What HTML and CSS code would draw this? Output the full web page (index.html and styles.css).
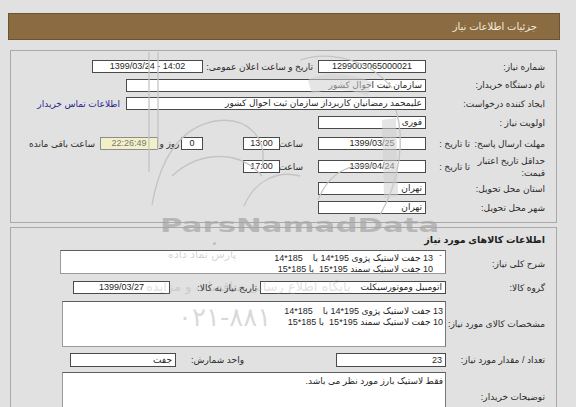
FILE: index.html
```html
<!DOCTYPE html>
<html lang="fa" dir="rtl">
<head>
<meta charset="utf-8">
<title>جزئیات اطلاعات نیاز</title>
<link rel="stylesheet" href="styles.css">
</head>
<body>
<div class="page">
  <div class="titlebar">جزئیات اطلاعات نیاز</div>

  <section class="panel p1">
    <div class="row h19">
      <div class="lbl">شماره نیاز:</div>
      <div class="box w108 center">1299003065000021</div>
      <div class="lbl2 w115">تاریخ و ساعت اعلان عمومی:</div>
      <div class="box w111 center ltr">1399/03/24 - 14:02</div>
    </div>
    <div class="row h18">
      <div class="lbl">نام دستگاه خریدار:</div>
      <div class="box w300">سازمان ثبت احوال کشور</div>
    </div>
    <div class="row h19">
      <div class="lbl">ایجاد کننده درخواست:</div>
      <div class="box w300">علیمحمد رمضانیان کاربرداز سازمان ثبت احوال کشور</div>
      <a class="link" href="#">اطلاعات تماس خریدار</a>
    </div>
    <div class="row h19">
      <div class="lbl">اولویت نیاز :</div>
      <div class="box w108">فوری</div>
    </div>
    <div class="row h23">
      <div class="lbl split"><span class="main">مهلت ارسال پاسخ:</span><span class="sub">تا تاریخ :</span></div>
      <div class="box w108 center">1399/03/25</div>
      <div class="hour">ساعت</div>
      <div class="box w37 center">13:00</div>
      <div class="spacer40"></div>
      <div class="box w22 center">0</div>
      <div class="day">روز و</div>
      <div class="box remain center">22:26:49</div>
      <div class="remain-lbl">ساعت باقی مانده</div>
    </div>
    <div class="row h23">
      <div class="lbl split"><span class="main two">حداقل تاریخ اعتبار<br>قیمت:</span><span class="sub">تا تاریخ :</span></div>
      <div class="box w108 center">1399/04/24</div>
      <div class="hour">ساعت</div>
      <div class="box w37 center">17:00</div>
    </div>
    <div class="row h21">
      <div class="lbl">استان محل تحویل:</div>
      <div class="box w108">تهران</div>
    </div>
    <div class="row h17">
      <div class="lbl">شهر محل تحویل:</div>
      <div class="box w108">تهران</div>
    </div>
  </section>

  <section class="panel p2">
    <div class="ptitle">اطلاعات کالاهای مورد نیاز</div>
    <div class="row r-a">
      <div class="lbl l2">شرح کلی نیاز:</div>
      <div class="area a1"><span class="scroll">&#710;</span>13 جفت لاستیک پژوی 195*14 با&nbsp;&nbsp;&nbsp;&nbsp;185*14<br>10 جفت لاستیک سمند 195*15&nbsp;&nbsp;با 185*15</div>
    </div>
    <div class="row r-b">
      <div class="lbl l2">گروه کالا:</div>
      <div class="box w186">اتومبیل وموتورسیکلت</div>
      <div class="lbl3">تاریخ نیاز به کالا:</div>
      <div class="box w97 center">1399/03/27</div>
    </div>
    <div class="row r-c">
      <div class="lbl l2">مشخصات کالای مورد نیاز:</div>
      <div class="area a2">13 جفت لاستیک پژوی 195*14 با&nbsp;&nbsp;&nbsp;&nbsp;185*14<br>10 جفت لاستیک سمند 195*15&nbsp;&nbsp;با 185*15</div>
    </div>
    <div class="row r-d">
      <div class="lbl l2">تعداد / مقدار مورد نیاز:</div>
      <div class="box w110 tall">23</div>
      <div class="lbl4">واحد شمارش:</div>
      <div class="box w106 tall">جفت</div>
    </div>
    <div class="row r-e">
      <div class="lbl l2">توضیحات خریدار:</div>
      <div class="area a3">فقط لاستیک بارز مورد نظر می باشد.</div>
    </div>
  </section>
</div>

<div class="watermark" aria-hidden="true">
  <svg class="wm-logo" width="576" height="407" viewBox="0 0 576 407">
    <g fill="none" stroke="#c4c4c4" stroke-width="1.3">
      <path d="M149 52 V172"/>
      <path d="M158 52 V150"/>
      <path d="M152 205 C160 160 178 128 215 121 C248 116 268 138 262 168"/>
      <path d="M172 176 C200 150 240 150 262 176"/>
      <path d="M244 206 C255 180 278 170 300 176"/>
      <path d="M300 60 C330 50 370 60 392 88"/>
      <path d="M396 110 C405 140 400 180 380 215"/>
      <path d="M318 200 C330 170 355 160 380 168"/>
    </g>
    <g fill="#d0d0d0" opacity="0.55">
      <path d="M308 80 C320 72 350 72 372 82 L368 96 C350 88 326 88 312 94 Z"/>
      <path d="M382 120 L396 118 L398 196 L384 198 Z"/>
    </g>
  </svg>
  <div class="wm-brand">ParsNamadData</div>
  <div class="wm-dot"></div>
  <div class="wm-fa">پارس نماد داده</div>
  <div class="wm-sub">پایگاه اطلاع رسانی مناقصات و مزایده</div>
  <div class="wm-phone">۰۲۱-۸۸۱</div>
</div>
</body>
</html>
```

FILE: styles.css
```css
* { box-sizing: border-box; }
html, body { margin: 0; padding: 0; }
body {
  width: 576px;
  height: 407px;
  overflow: hidden;
  position: relative;
  background: #e1e1e1;
  font-family: "Liberation Sans", "DejaVu Sans", sans-serif;
  font-size: 9px;
  color: #2b2b2b;
}
.page { padding: 13px 16px 0 8px; }

.titlebar {
  height: 27px;
  background: #8b6c42;
  border: 1px solid #6a5331;
  color: #f3ecdf;
  font-size: 10px;
  line-height: 25px;
  padding-right: 22px;
}

.panel {
  border: 1px solid #a8a8a8;
  margin: 0 3px 0 2px;
  padding-right: 11px;
}
.p1 { margin-top: 10px; padding-top: 6px; height: 173px; }
.p2 { margin-top: 4px; height: 200px; }

.row { display: flex; align-items: center; }
.h17 { height: 17px; }
.h18 { height: 18px; }
.h19 { height: 19px; }
.h21 { height: 21px; }
.h23 { height: 23px; }

.lbl {
  width: 115px;
  margin-left: 4px;
  flex: none;
  white-space: nowrap;
}
.lbl.split { display: flex; align-items: center; }
.lbl .main { width: 73px; flex: none; }
.lbl .main.two { line-height: 12px; white-space: normal; }
.lbl .sub { flex: 1; padding-right: 2px; }

.box {
  flex: none;
  height: 13px;
  line-height: 11px;
  background: #fff;
  border: 1px solid #4a4a4a;
  padding: 0 3px;
  white-space: nowrap;
  overflow: hidden;
  color: #1f1f1f;
}
.box.center { text-align: center; }
.box.ltr { direction: ltr; }
.box.tall { height: 14px; line-height: 12px; }
.w22 { width: 22px; }
.w37 { width: 37px; }
.w97 { width: 97px; }
.w106 { width: 106px; }
.w108 { width: 108px; }
.w110 { width: 110px; }
.w111 { width: 111px; }
.w186 { width: 186px; }
.w300 { width: 300px; }

.lbl2 { flex: none; padding-right: 5px; white-space: nowrap; }
.w115 { width: 115px; }

.link {
  margin-right: 6px;
  color: #25258f;
  text-decoration: none;
  white-space: nowrap;
}

.hour { width: 38px; flex: none; padding-right: 15px; white-space: nowrap; }
.spacer40 { width: 40px; flex: none; }
.day { width: 23px; flex: none; text-align: center; white-space: nowrap; }
.box.remain {
  width: 58px;
  background: #f3f0c8;
  border-color: #8d8d8d;
  color: #777;
}
.remain-lbl { margin-right: 5px; white-space: nowrap; }

/* panel 2 */
.ptitle {
  height: 22px;
  padding-top: 6px;
  line-height: 12px;
  font-weight: bold;
  font-size: 9.5px;
  color: #222;
}
.l2 { width: 96px; margin-left: 3px; }
.r-a { height: 24px; align-items: stretch; }
.r-a .l2 { padding-top: 9px; }
.r-b { height: 27px; }
.r-c { height: 46px; }
.r-d { height: 25px; }
.r-e { height: 50px; }

.area {
  flex: none;
  width: 384px;
  height: 100%;
  background: #fff;
  border: 1px solid #9a9a9a;
  border-top-color: #5d5d5d;
  border-right-color: #777;
  padding: 2px 2px 0 2px;
  line-height: 10.5px;
  color: #1f1f1f;
  white-space: nowrap;
  overflow: hidden;
  position: relative;
}
.a1 { width: 386px; padding-right: 12px; padding-top: 2px; }
.a2 { padding-top: 4px; }
.a3 { height: 50px; padding-top: 3px; }
.scroll {
  position: absolute;
  right: 3px;
  top: 2px;
  font-size: 8px;
  color: #555;
}

.lbl3 { width: 90px; flex: none; padding-right: 3px; white-space: nowrap; }
.lbl4 { width: 160px; flex: none; padding-right: 92px; white-space: nowrap; }

/* watermark overlay */
.watermark {
  position: absolute;
  left: 0;
  top: 0;
  width: 576px;
  height: 407px;
  pointer-events: none;
  direction: ltr;
}
.wm-logo { position: absolute; left: 0; top: 0; }
.wm-brand {
  position: absolute;
  left: 160px;
  top: 215px;
  font-family: "DejaVu Sans", sans-serif;
  font-weight: bold;
  font-size: 19px;
  line-height: 20px;
  color: rgba(165, 165, 165, 0.7);
  transform: scaleX(1.62);
  transform-origin: left top;
  white-space: nowrap;
}
.wm-dot {
  position: absolute;
  left: 213px;
  top: 242px;
  width: 3px;
  height: 3px;
  border-radius: 50%;
  background: #bdbdbd;
}
.wm-fa {
  position: absolute;
  left: 168px;
  top: 248px;
  font-family: "DejaVu Sans", sans-serif;
  font-size: 11px;
  color: rgba(160, 160, 160, 0.45);
  white-space: nowrap;
  direction: rtl;
}
.wm-sub {
  position: absolute;
  left: 146px;
  top: 279px;
  font-family: "DejaVu Sans", sans-serif;
  font-size: 13px;
  color: rgba(150, 150, 150, 0.3);
  white-space: nowrap;
  direction: rtl;
}
.wm-phone {
  position: absolute;
  left: 178px;
  top: 302px;
  font-family: "DejaVu Sans", sans-serif;
  font-size: 26px;
  line-height: 30px;
  color: rgba(170, 170, 170, 0.45);
  white-space: nowrap;
}
```
